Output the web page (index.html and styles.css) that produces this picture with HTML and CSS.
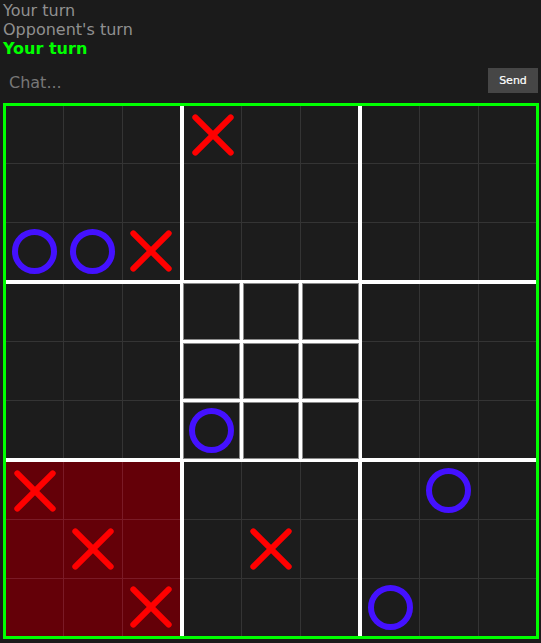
FILE: index.html
```html
<!DOCTYPE html>
<html lang="en">
<head>
<meta charset="utf-8">
<title>Ultimate Tic-Tac-Toe</title>
<link rel="stylesheet" href="styles.css">
</head>
<body>
<div class="status">
  <div class="line">Your turn</div>
  <div class="line">Opponent's turn</div>
  <div class="line current">Your turn</div>
</div>
<form class="chat">
  <input class="chat-input" type="text" placeholder="Chat...">
  <button class="send" type="button">Send</button>
</form>
<div class="board">
  <div class="sub">
    <div class="cell"></div><div class="cell"></div><div class="cell"></div>
    <div class="cell"></div><div class="cell"></div><div class="cell"></div>
    <div class="cell o"></div><div class="cell o"></div><div class="cell x"></div>
  </div>
  <div class="sub">
    <div class="cell x"></div><div class="cell"></div><div class="cell"></div>
    <div class="cell"></div><div class="cell"></div><div class="cell"></div>
    <div class="cell"></div><div class="cell"></div><div class="cell"></div>
  </div>
  <div class="sub">
    <div class="cell"></div><div class="cell"></div><div class="cell"></div>
    <div class="cell"></div><div class="cell"></div><div class="cell"></div>
    <div class="cell"></div><div class="cell"></div><div class="cell"></div>
  </div>
  <div class="sub">
    <div class="cell"></div><div class="cell"></div><div class="cell"></div>
    <div class="cell"></div><div class="cell"></div><div class="cell"></div>
    <div class="cell"></div><div class="cell"></div><div class="cell"></div>
  </div>
  <div class="sub active">
    <div class="cell"></div><div class="cell"></div><div class="cell"></div>
    <div class="cell"></div><div class="cell"></div><div class="cell"></div>
    <div class="cell o"></div><div class="cell"></div><div class="cell"></div>
  </div>
  <div class="sub">
    <div class="cell"></div><div class="cell"></div><div class="cell"></div>
    <div class="cell"></div><div class="cell"></div><div class="cell"></div>
    <div class="cell"></div><div class="cell"></div><div class="cell"></div>
  </div>
  <div class="sub won-x">
    <div class="cell x"></div><div class="cell"></div><div class="cell"></div>
    <div class="cell"></div><div class="cell x"></div><div class="cell"></div>
    <div class="cell"></div><div class="cell"></div><div class="cell x"></div>
  </div>
  <div class="sub">
    <div class="cell"></div><div class="cell"></div><div class="cell"></div>
    <div class="cell"></div><div class="cell x"></div><div class="cell"></div>
    <div class="cell"></div><div class="cell"></div><div class="cell"></div>
  </div>
  <div class="sub">
    <div class="cell"></div><div class="cell o"></div><div class="cell"></div>
    <div class="cell"></div><div class="cell"></div><div class="cell"></div>
    <div class="cell o"></div><div class="cell"></div><div class="cell"></div>
  </div>
</div>
</body>
</html>
```

FILE: styles.css
```css
html, body {
  background: #1b1b1b;
}
body {
  margin: 0;
  padding: 1px 2px 4px 3px;
  font-family: "DejaVu Sans", Verdana, sans-serif;
  font-size: 16px;
  color: #909090;
}
.status {
  line-height: 19px;
  margin-bottom: 1px;
}
.line {
  height: 19px;
  white-space: nowrap;
}
.line.current {
  color: #00ff00;
  font-weight: bold;
}
.chat {
  display: flex;
  align-items: center;
  height: 43px;
  margin: 0;
}
.chat-input {
  flex: 1;
  min-width: 0;
  height: 36px;
  box-sizing: border-box;
  padding: 4px 0 0 6px;
  border: 0;
  outline: none;
  background: transparent;
  color: #dddddd;
  font-family: "DejaVu Sans", Verdana, sans-serif;
  font-size: 16px;
}
.chat-input::placeholder {
  color: #777777;
}
.send {
  width: 50px;
  height: 25px;
  margin-right: 1px;
  padding: 0;
  border: 0;
  background: #464646;
  color: #ffffff;
  font-family: "DejaVu Sans", Verdana, sans-serif;
  font-size: 11px;
  -webkit-text-stroke: 0.2px #ffffff;
}
.board {
  margin-top: 1px;
  width: 536px;
  height: 536px;
  box-sizing: border-box;
  border: 3px solid #00ff00;
  display: grid;
  grid-template-columns: repeat(3, 1fr);
  grid-template-rows: repeat(3, 1fr);
  gap: 4px;
  background: #ffffff;
}
.sub {
  display: grid;
  grid-template-columns: repeat(3, 1fr);
  grid-template-rows: repeat(3, 1fr);
  gap: 1px;
  background: #343434;
}
.sub.active {
  gap: 5px;
  background: #ffffff;
}
.cell {
  position: relative;
  background: #1c1c1c;
}
.sub.active .cell {
  box-shadow: 0 0 0 1px #8a8a8a;
}
.sub.won-x {
  background: #7a1a26;
}
.sub.won-x .cell {
  background: #640008;
}
.cell.x::before,
.cell.x::after {
  content: "";
  position: absolute;
  left: 50%;
  top: 50%;
  width: 56px;
  height: 6px;
  margin: -3px 0 0 -28px;
  border-radius: 3px;
  background: #ff0000;
  transform: rotate(45deg);
}
.cell.x::after {
  transform: rotate(-45deg);
}
.cell.o::before {
  content: "";
  position: absolute;
  left: 50%;
  top: 50%;
  width: 33px;
  height: 33px;
  margin: -22.5px 0 0 -22.5px;
  border: 6px solid #4411ff;
  border-radius: 50%;
}
```
